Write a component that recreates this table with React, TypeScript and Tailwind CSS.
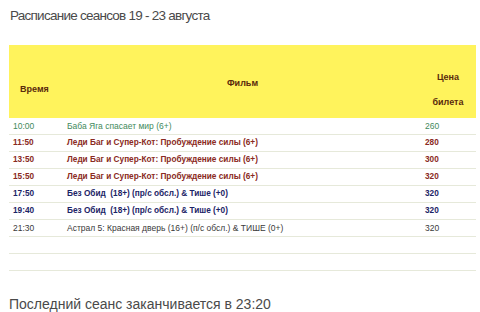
const ROWS = [
  { time: "10:00", film: "Баба Яга спасает мир (6+)", price: "260", cls: "text-[#3f8a5c] text-[8.5px]" },
  { time: "11:50", film: "Леди Баг и Супер-Кот: Пробуждение силы (6+)", price: "280", cls: "text-[#8a2a22] text-[8.25px] font-bold" },
  { time: "13:50", film: "Леди Баг и Супер-Кот: Пробуждение силы (6+)", price: "300", cls: "text-[#8a2a22] text-[8.25px] font-bold" },
  { time: "15:50", film: "Леди Баг и Супер-Кот: Пробуждение силы (6+)", price: "320", cls: "text-[#8a2a22] text-[8.25px] font-bold" },
  { time: "17:50", film: "Без Обид  (18+) (пр/с обсл.) & Тише (+0)", price: "320", cls: "text-[#1c2466] text-[8.25px] font-bold" },
  { time: "19:40", film: "Без Обид  (18+) (пр/с обсл.) & Тише (+0)", price: "320", cls: "text-[#1c2466] text-[8.25px] font-bold" },
  { time: "21:30", film: "Астрал 5: Красная дверь (16+) (п/с обсл.) & ТИШЕ (0+)", price: "320", cls: "text-[#3a3a3a] text-[8.5px]" },
];

export default function App() {
  return (
    <div className="w-[480px] h-[312px] bg-white px-[9px] overflow-hidden" style={{ fontFamily: '"Liberation Sans", Arial, sans-serif' }}>
      <h1 className="pt-[6px] pl-[1px] text-[13.5px] tracking-[-0.75px] leading-[20px] text-[#4a4a4a]">Расписание сеансов 19 - 23 августа</h1>

      <div className="mt-[19px] w-[467px]">
        {/* header */}
        <div className="grid grid-cols-[54px_1fr_66px] h-[73px] bg-[#fff35c] text-[9px] font-bold text-[#5a2a0c]">
          <div className="pl-[11px] pt-[38px]">Время</div>
          <div className="text-center pt-[32px] pl-[12px]">Фильм</div>
          <div className="text-center pt-[20px] pl-[10px] leading-[25px]">
            Цена
            <br />
            билета
          </div>
        </div>

        {ROWS.map((r) => (
          <div
            key={r.time}
            className={`grid grid-cols-[58px_1fr_62px] h-[17px] items-center border-b border-[#e6e9da] ${r.cls}`}
          >
            <div className="pl-[4px]">{r.time}</div>
            <div className="whitespace-pre">{r.film}</div>
            <div className="pl-[11px]">{r.price}</div>
          </div>
        ))}
        <div className="h-[17px] border-b border-[#e6e9da]" />
        <div className="h-[17px] border-b border-[#e6e9da]" />
      </div>

      <p className="mt-[23px] text-[14px] leading-[20px] text-[#4a4a4a]">Последний сеанс заканчивается в 23:20</p>
    </div>
  );
}
